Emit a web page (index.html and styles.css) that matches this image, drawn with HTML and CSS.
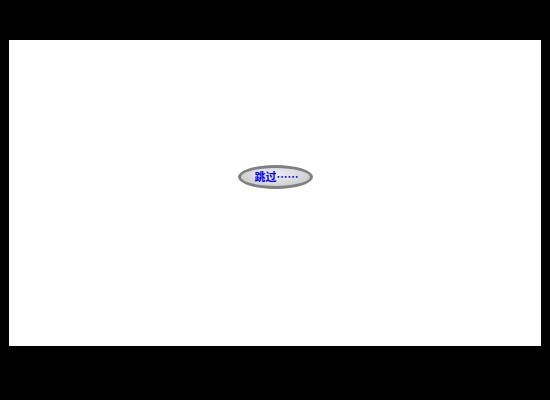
FILE: index.html
```html
<!DOCTYPE html>
<html lang="zh">
<head>
<meta charset="utf-8">
<title>跳过</title>
<link rel="stylesheet" href="styles.css">
</head>
<body>
<div class="screen">
  <button class="skip" type="button">跳过……</button>
</div>
</body>
</html>
```
FILE: styles.css
```css
html, body {
  margin: 0;
  padding: 0;
  background: #000;
}
.screen {
  margin: 40px 9px 0;
  height: 306px;
  box-sizing: border-box;
  background: #fff;
  display: flex;
  justify-content: center;
  align-items: flex-start;
  padding-top: 125px;
}
.skip {
  box-sizing: border-box;
  width: 75px;
  height: 24px;
  margin-left: 1px;
  padding: 0 0 1px 2px;
  border: 3px solid #808080;
  border-radius: 50%;
  background: radial-gradient(ellipse at 50% 35%, #ededed 0%, #dadada 50%, #c2c2c2 100%);
  color: #0000ff;
  font-family: "Noto Sans CJK SC", "Noto Sans", sans-serif;
  font-size: 11px;
  font-weight: bold;
  line-height: 17px;
  text-align: center;
  white-space: nowrap;
  cursor: pointer;
}
```
